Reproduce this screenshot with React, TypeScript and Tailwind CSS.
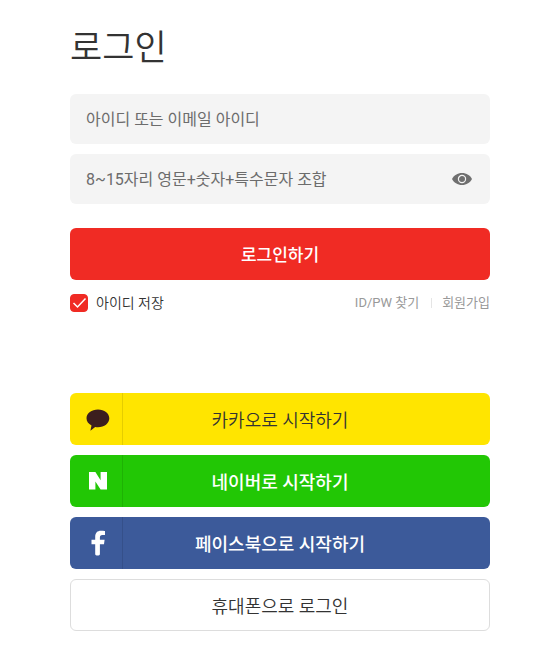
import { FC, ReactNode, useState } from 'react'

interface SocialButtonProps {
  label: string
  className: string
  icon?: ReactNode
}

const SocialButton: FC<SocialButtonProps> = ({ label, className, icon }) => {
  return (
    <button type="button" className={`relative h-13 w-full cursor-pointer rounded-md pt-1 text-lg ${className}`}>
      {icon && (
        <span className="absolute inset-y-0 left-0 flex w-[53px] items-center justify-center border-r border-black/10 pl-1">
          {icon}
        </span>
      )}
      {label}
    </button>
  )
}

const KakaoIcon = () => (
  <svg className="h-6 w-6" viewBox="0 0 24 24" fill="#3c1e1e" aria-hidden="true">
    <path d="M12 2.5C5.600 2.500.5 6.400.5 11.300c0 3 1.900 5.600 5 7.200L4.400 23.800l4.800-3.700c.9.1 1.900.2 2.800.2 6.300 0 11.300-3.900 11.300-9S18.300 2.500 12 2.500z" />
  </svg>
)

const NaverIcon = () => (
  <svg className="h-[18px] w-[18px]" viewBox="0 0 18 18" fill="#fff" aria-hidden="true">
    <path d="M0 0h6.400l5.200 8.200V0H18v17.600h-6.400L6.400 9.400v8.200H0z" />
  </svg>
)

const FacebookIcon = () => (
  <svg className="h-[26px] w-[14px]" viewBox="0 0 14 26" fill="#fff" aria-hidden="true">
    <path d="M4.200 24.200V14.200H.5V9.800h3.700V7C4.200 2.800 6.500.8 9.800.8c1.600 0 3.200.1 4.200.3v4h-2.600c-2 0-2.500.9-2.500 2.400v2.300h4.700l-.6 4.400H8.900v10c0 1.700-4.700 1.700-4.700 0z" />
  </svg>
)

const EyeIcon = () => (
  <svg className="h-[14px] w-5" viewBox="0 0 20 14" aria-hidden="true">
    <path d="M10 1C5.500 1 1.800 3.400 0 7c1.800 3.600 5.500 6 10 6s8.200-2.400 10-6c-1.800-3.600-5.500-6-10-6z" fill="#6f6f6f" />
    <circle cx="10" cy="7" r="3.600" fill="#6f6f6f" stroke="#f4f4f4" strokeWidth="1.200" />
  </svg>
)

const App = () => {
  const [showPassword, setShowPassword] = useState(false)

  return (
    <main className="bg-white pt-[22px] pr-[63px] pb-9 pl-[70px] font-[Roboto,'Noto_Sans_CJK_KR',sans-serif] text-[#333]">
      <h1 className="text-[35px] leading-[54px] font-[350]">로그인</h1>

      <form className="mt-[18px]" onSubmit={(e) => e.preventDefault()}>
        <input
          type="text"
          aria-label="아이디"
          placeholder="아이디 또는 이메일 아이디"
          className="block h-[50px] w-full rounded-md bg-[#f4f4f4] px-4 text-base outline-none placeholder:text-[#6c6c6c]"
        />
        <div className="relative mt-2.5">
          <input
            type={showPassword ? 'text' : 'password'}
            aria-label="비밀번호"
            placeholder="8~15자리 영문+숫자+특수문자 조합"
            className="block h-[50px] w-full rounded-md bg-[#f4f4f4] pr-12 pl-4 text-base outline-none placeholder:text-[#6c6c6c]"
          />
          <button
            type="button"
            aria-label="비밀번호 표시"
            className="absolute inset-y-0 right-0 flex w-14 cursor-pointer items-center justify-center"
            onClick={() => setShowPassword(!showPassword)}
          >
            <EyeIcon />
          </button>
        </div>
        <button type="submit" className="mt-6 h-13 w-full cursor-pointer rounded-md bg-[#f02b24] pt-1 text-[17px] font-medium text-white">
          로그인하기
        </button>

        <div className="mt-3 flex items-center justify-between">
          <label className="flex cursor-pointer items-center text-sm leading-[22px] font-[350]">
            <span className="relative mr-2 h-[18px] w-[18px]">
              <input
                type="checkbox"
                defaultChecked
                className="peer block h-[18px] w-[18px] cursor-pointer appearance-none rounded-sm border border-[#ddd] checked:border-[#f02b24] checked:bg-[#f02b24]"
              />
              <svg className="pointer-events-none absolute inset-0 hidden peer-checked:block" viewBox="0 0 18 18" fill="none" stroke="#fff" strokeWidth="1.500" aria-hidden="true">
                <path d="M3.500 9l4 4 8-8.500" />
              </svg>
            </span>
            아이디 저장
          </label>
          <div className="flex items-center text-[13px] leading-[22px] text-[#999]">
            <a href="#">ID/PW 찾기</a>
            <span className="mr-2.5 ml-3 h-2.5 w-px bg-[#e5e5e5]" />
            <a href="#">회원가입</a>
          </div>
        </div>
      </form>

      <div className="mt-[79px] flex flex-col gap-2.5">
        <SocialButton label="카카오로 시작하기" className="bg-[#ffe500] font-[350]" icon={<KakaoIcon />} />
        <SocialButton label="네이버로 시작하기" className="bg-[#22c705] font-medium text-white" icon={<NaverIcon />} />
        <SocialButton label="페이스북으로 시작하기" className="bg-[#3c5a9a] font-medium text-white" icon={<FacebookIcon />} />
        <SocialButton label="휴대폰으로 로그인" className="border border-[#ddd] bg-white font-[350]" />
      </div>
    </main>
  )
}

export default App
